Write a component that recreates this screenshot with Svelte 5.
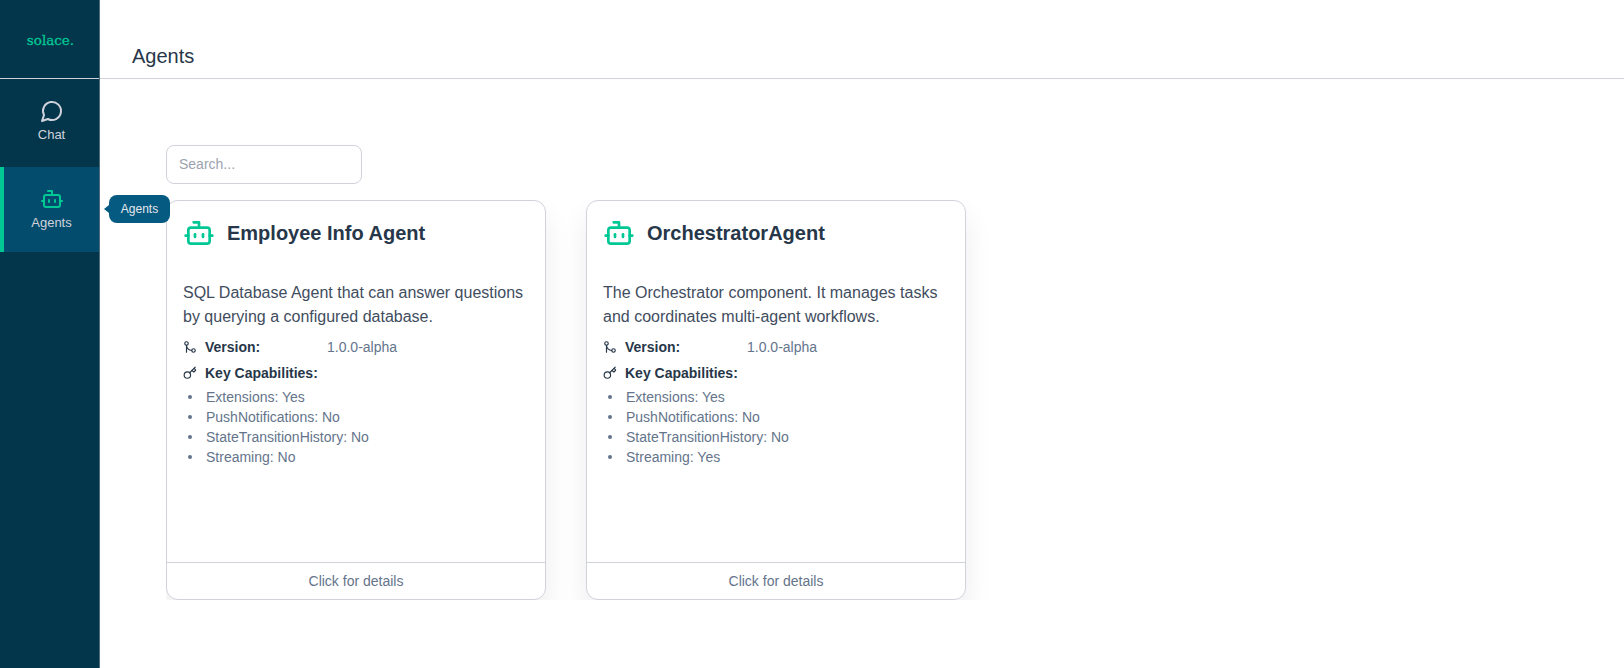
<script>
  const agents = [
    { name: 'Employee Info Agent', desc: 'SQL Database Agent that can answer questions by querying a configured database.', caps: ['Extensions: Yes', 'PushNotifications: No', 'StateTransitionHistory: No', 'Streaming: No'] },
    { name: 'OrchestratorAgent', desc: 'The Orchestrator component. It manages tasks and coordinates multi-agent workflows.', caps: ['Extensions: Yes', 'PushNotifications: No', 'StateTransitionHistory: No', 'Streaming: Yes'] }
  ];
</script>

{#snippet bot(size)}
  <svg width={size} height={size} viewBox="0 0 24 24" fill="none" stroke="currentColor" stroke-width="2" stroke-linecap="round" stroke-linejoin="round">
    <path d="M12 8V4H8" /><rect width="16" height="12" x="4" y="8" rx="2" /><path d="M2 14h2" /><path d="M20 14h2" /><path d="M15 13v2" /><path d="M9 13v2" />
  </svg>
{/snippet}

<div class="app">
  <aside class="sidebar">
    <div class="logo"><span>solace.</span></div>
    <nav>
      <div class="nav-item">
        <svg width="24" height="24" viewBox="0 0 24 24" fill="none" stroke="currentColor" stroke-width="2" stroke-linecap="round" stroke-linejoin="round"><path d="M7.9 20A9 9 0 1 0 4 16.1L2 22Z" /></svg>
        <span>Chat</span>
      </div>
      <div class="nav-item active">
        <span class="nav-icon">{@render bot(24)}</span>
        <span>Agents</span>
        <div class="tooltip">Agents</div>
      </div>
    </nav>
  </aside>
  <main>
    <header><h1>Agents</h1></header>
    <section class="content">
      <input class="search" type="text" placeholder="Search..." />
      <div class="cards">
        {#each agents as a}
          <article class="card">
            <div class="body">
              <div class="title">
                <span class="title-icon">{@render bot(32)}</span>
                <h2>{a.name}</h2>
              </div>
              <p class="desc">{a.desc}</p>
              <div class="row">
                <svg width="14" height="14" viewBox="0 0 24 24" fill="none" stroke="currentColor" stroke-width="2" stroke-linecap="round" stroke-linejoin="round"><circle cx="18" cy="18" r="3" /><circle cx="6" cy="6" r="3" /><path d="M6 21V9a9 9 0 0 0 9 9" /></svg>
                <strong class="label">Version:</strong>
                <span class="value">1.0.0-alpha</span>
              </div>
              <div class="row caps">
                <svg width="14" height="14" viewBox="0 0 24 24" fill="none" stroke="currentColor" stroke-width="2" stroke-linecap="round" stroke-linejoin="round"><path d="m15.5 7.5 2.3 2.3a1 1 0 0 0 1.4 0l2.1-2.1a1 1 0 0 0 0-1.4L19 4" /><path d="m21 2-9.6 9.6" /><circle cx="7.5" cy="15.5" r="5.5" /></svg>
                <strong>Key Capabilities:</strong>
              </div>
              <ul>
                {#each a.caps as c}<li>{c}</li>{/each}
              </ul>
            </div>
            <div class="foot">Click for details</div>
          </article>
        {/each}
      </div>
    </section>
  </main>
</div>

<style>
  :global(body) { margin: 0; font-family: "Liberation Sans", Arial, sans-serif; background: #fff; }
  .app { display: flex; height: 668px; overflow: hidden; }
  .sidebar { width: 100px; flex: none; background: #03354b; color: #d0d3dc; border-right: 1px solid #4d6b7c; box-sizing: border-box; }
  .logo { height: 79px; display: flex; align-items: center; justify-content: center; border-bottom: 1px solid #d0d3dc; box-sizing: border-box; padding: 2px 0 0 2px; }
  .logo span { font-family: "DejaVu Serif", serif; font-size: 13.5px; color: #00c895; -webkit-text-stroke: 0.3px #00c895; }
  nav { display: flex; flex-direction: column; }
  .nav-item { position: relative; height: 88px; display: flex; flex-direction: column; align-items: center; gap: 4px; padding-top: 20px; font-size: 13px; line-height: 15px; box-sizing: border-box; border-left: 4px solid transparent; }
  .nav-item.active { background: #034c6d; border-left-color: #00c895; height: 85px; }
  .nav-item svg { display: block; }
  .nav-icon { color: #00c895; height: 24px; }
  .tooltip { position: absolute; left: 105px; top: 28px; width: 61px; height: 28px; line-height: 28px; text-align: center; background: #055a82; color: #e6e8ec; border-radius: 8px; font-size: 12px; z-index: 3; }
  .tooltip::before { content: ""; position: absolute; left: -5px; top: 10px; border-style: solid; border-width: 4px 5px 4px 0; border-color: transparent #055a82 transparent transparent; }
  main { flex: 1; min-width: 0; }
  header { height: 79px; box-sizing: border-box; border-bottom: 1px solid #d0d3dc; padding: 44px 32px 0; }
  h1 { margin: 0; font-size: 20px; font-weight: 400; line-height: 24px; color: #273749; }
  .content { padding: 66px 64px 0 66px; }
  .search { display: block; width: 196px; height: 39px; box-sizing: border-box; border: 1px solid #d0d3dc; border-radius: 8px; padding: 0 12px 1px; font: 14px "Liberation Sans", Arial, sans-serif; outline: none; }
  .search::placeholder { color: #9ca3af; opacity: 1; }
  .cards { display: flex; gap: 40px; margin-top: 16px; height: 400px; overflow: hidden; padding-right: 40px; }
  .card { width: 380px; height: 400px; flex: none; box-sizing: border-box; border: 1px solid #d0d3dc; border-radius: 12px; background: #fff; box-shadow: 0 15px 28px rgba(0,0,0,.08); display: flex; flex-direction: column; }
  .body { flex: 1; padding: 16px 16px 0; color: #273749; }
  .title { display: flex; align-items: center; gap: 12px; height: 32px; }
  .title-icon { color: #00c895; height: 32px; }
  .title svg { display: block; }
  h2 { margin: 0; font-size: 20px; line-height: 28px; font-weight: 700; color: #273749; }
  .desc { margin: 32px 0 0; font-size: 16px; line-height: 24px; color: #3f4d5e; }
  .row { display: flex; align-items: center; font-size: 14px; line-height: 20px; margin-top: 8px; }
  .row svg { flex: none; margin-right: 8px; }
  .row.caps { margin-top: 6px; }
  .label { width: 122px; flex: none; }
  .value { color: #64748b; }
  ul { margin: 4px 0 0; padding: 0 0 0 23px; font-size: 14px; line-height: 20px; color: #64748b; list-style: none; }
  li { position: relative; }
  li::before { content: ""; position: absolute; left: -18px; top: 8px; width: 4px; height: 4px; border-radius: 50%; background: #64748b; }
  .foot { height: 37px; line-height: 36px; border-top: 1px solid #d0d3dc; text-align: center; font-size: 14px; color: #64748b; box-sizing: border-box; flex: none; }
</style>
